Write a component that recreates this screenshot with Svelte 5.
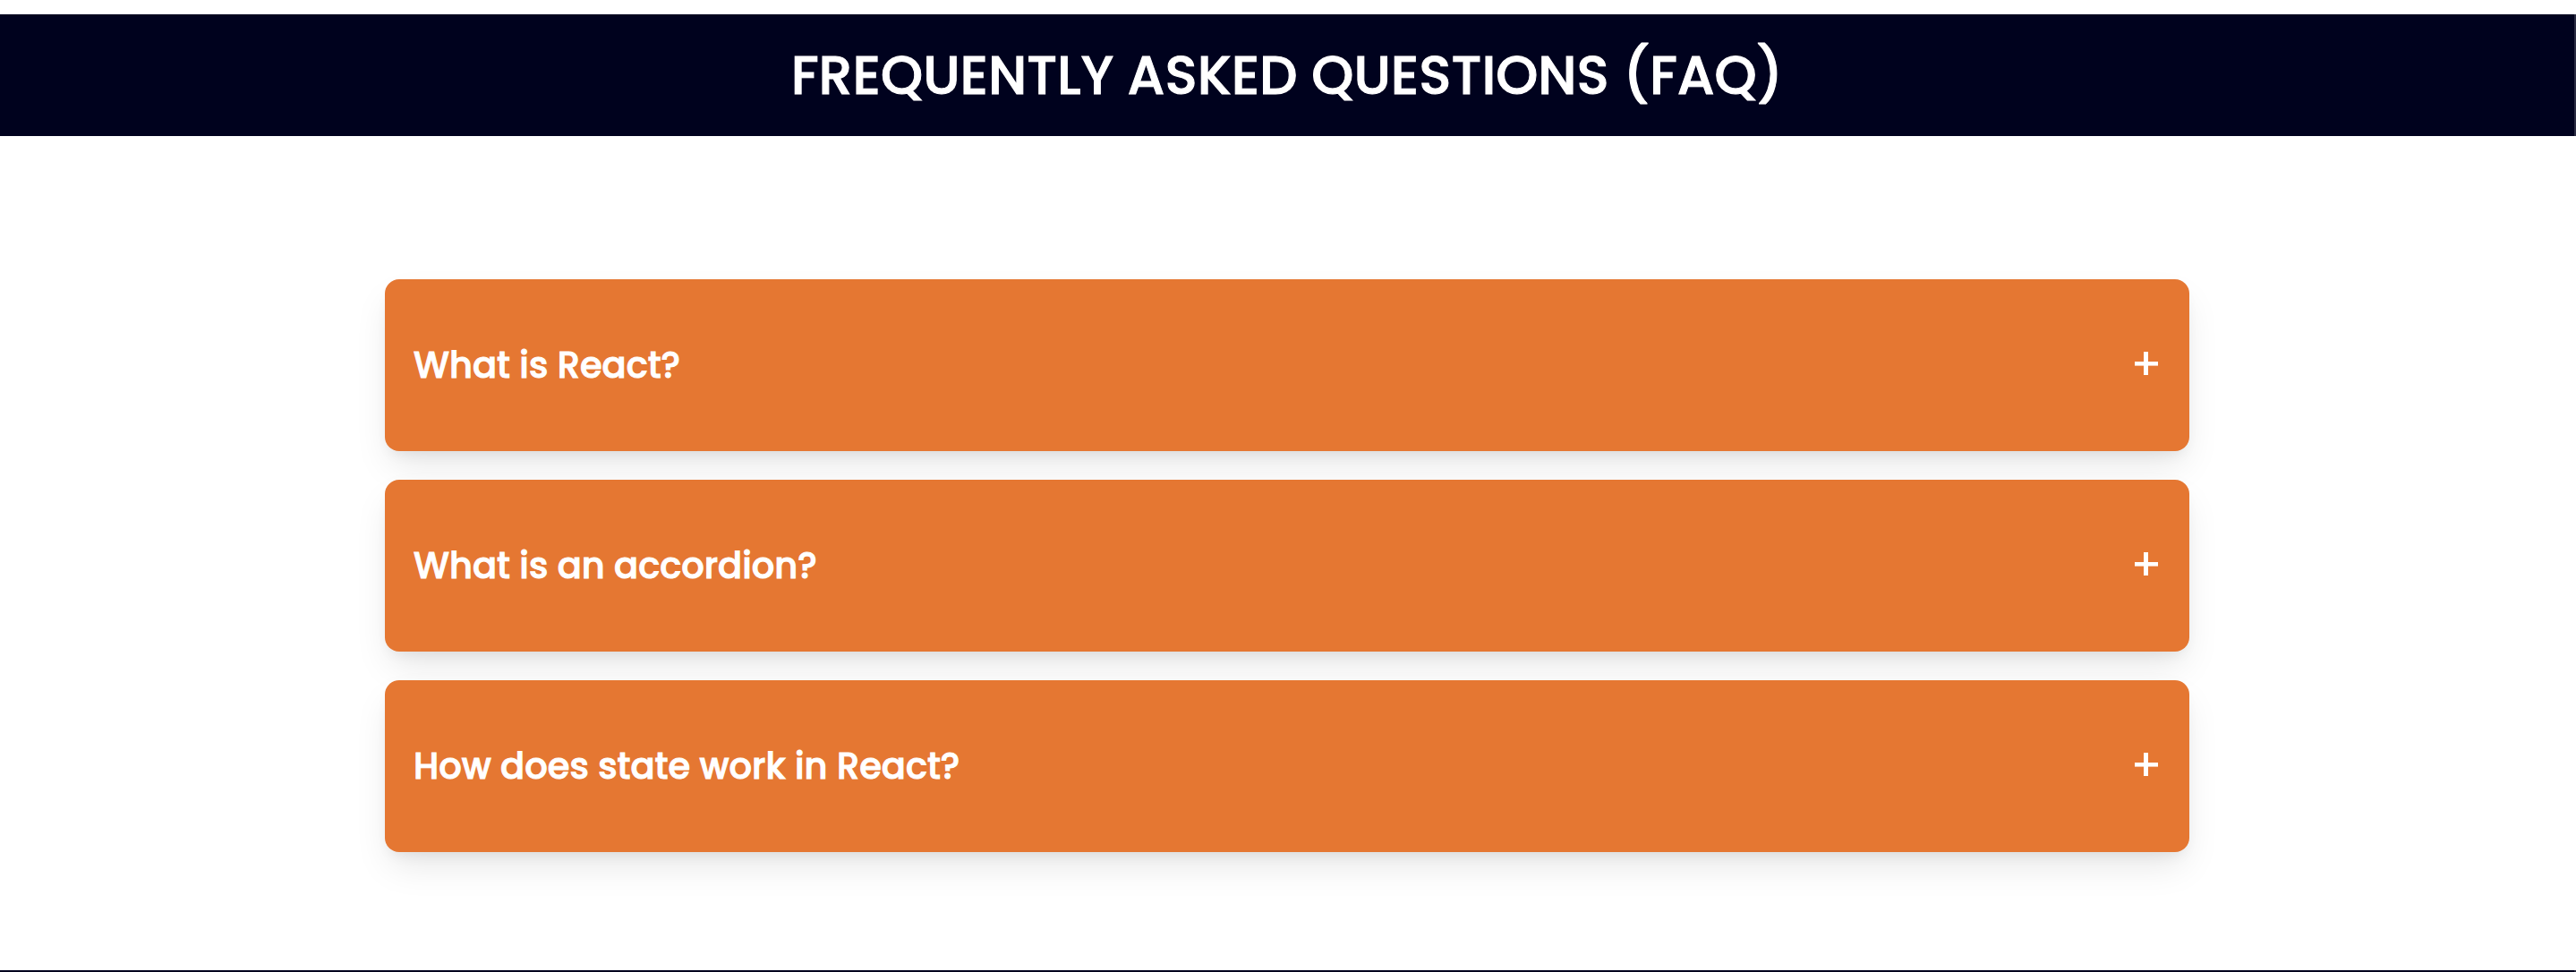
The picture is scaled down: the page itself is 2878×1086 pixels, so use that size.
<script>
  const items = [
    { question: 'What is React?', answer: 'React is a JavaScript library for building user interfaces.' },
    { question: 'What is an accordion?', answer: 'An accordion is a list of headings that expand to show more content.' },
    { question: 'How does state work in React?', answer: 'State holds the data a component remembers between renders.' }
  ];
  let open = $state(-1);
  const toggle = (i) => (open = open === i ? -1 : i);
</script>

<div class="page">
  <header>
    <h1>FREQUENTLY ASKED QUESTIONS (FAQ)</h1>
  </header>
  <main>
    {#each items as item, i}
      <section class="card">
        <h2>
          <button type="button" aria-expanded={open === i} onclick={() => toggle(i)}>
            <span>{item.question}</span>
            <svg viewBox="0 0 26 30" aria-hidden="true">
              {#if open !== i}<rect x="10" y="0" width="5" height="26" />{/if}
              <rect x="0" y="11" width="26" height="4.6" />
            </svg>
          </button>
        </h2>
        {#if open === i}<p>{item.answer}</p>{/if}
      </section>
    {/each}
  </main>
  <footer></footer>
</div>

<style>
  :global(body) {
    margin: 0;
    background: #fff;
  }
  .page {
    padding-top: 16px;
    font-family: Poppins, Inter, 'Liberation Sans', sans-serif;
    color: #fff;
  }
  header {
    padding: 24px;
    background: #00021e;
    border-right: 2px solid #2b2c43;
    text-align: center;
  }
  h1 {
    margin: 0;
    font-size: 60px;
    line-height: 88px;
    font-weight: 500;
    -webkit-text-stroke: 1px #fff;
  }
  main {
    display: flex;
    flex-direction: column;
    gap: 32px;
    width: calc(70% + 2px);
    max-width: 2016px;
    margin: 0 auto;
    padding: 160px 2px 132px 0;
  }
  .card {
    border-radius: 16px;
    background: #e57732;
    box-shadow: 0 20px 40px -6px rgba(0, 0, 0, 0.1), 0 8px 16px -6px rgba(0, 0, 0, 0.08);
  }
  h2 {
    margin: 0;
  }
  button {
    display: flex;
    align-items: center;
    justify-content: space-between;
    width: 100%;
    padding: 64px 32px;
    border: 0;
    background: none;
    color: inherit;
    font: inherit;
    font-size: 40px;
    line-height: 64px;
    font-weight: 500;
    text-align: left;
    cursor: pointer;
    -webkit-text-stroke: 1px #fff;
  }
  svg {
    width: 26px;
    height: 30px;
    margin-right: 3px;
    fill: #fff;
  }
  p {
    margin: 0;
    padding: 0 32px 48px;
    font-size: 32px;
    line-height: 48px;
  }
  footer {
    height: 2px;
    background: #00021e;
    border-right: 2px solid #2b2c43;
  }
</style>
